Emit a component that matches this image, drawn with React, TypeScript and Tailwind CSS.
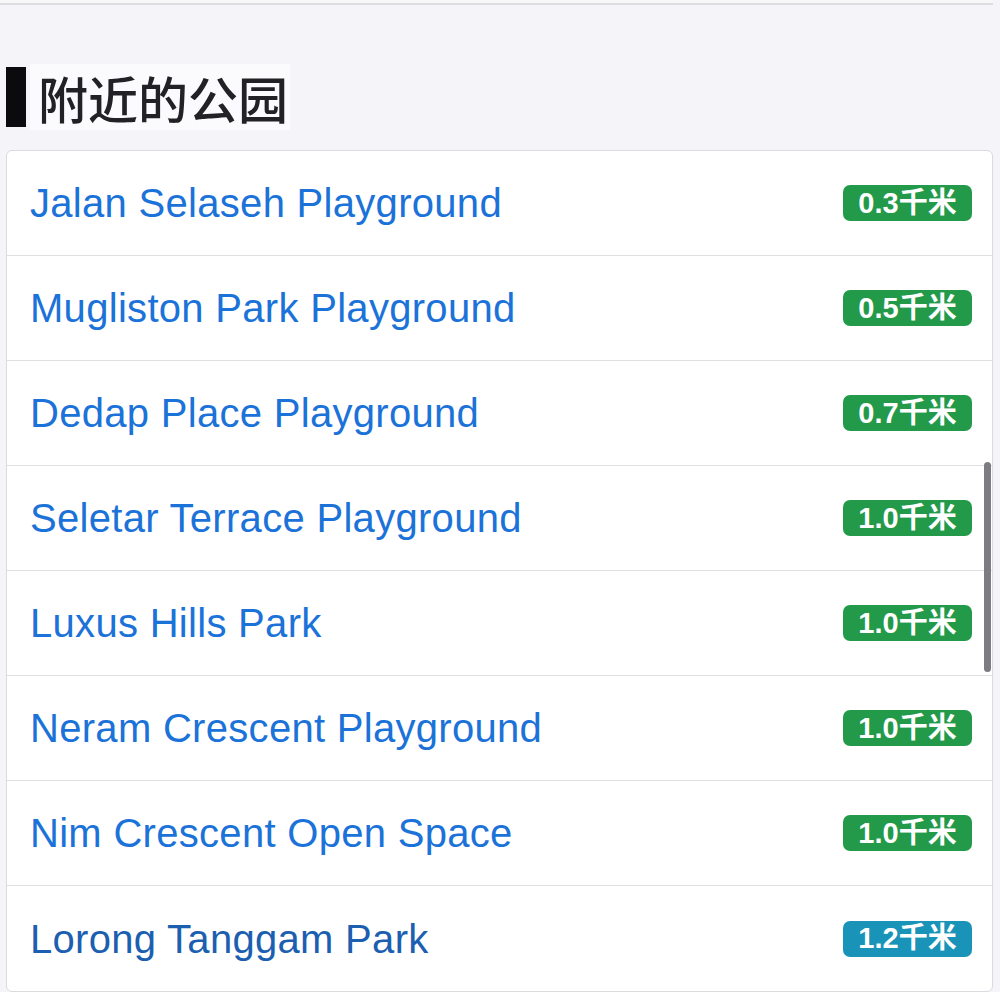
import React from "react";

const parks: { name: string; dist: string; blue?: boolean }[] = [
  { name: "Jalan Selaseh Playground", dist: "0.3千米" },
  { name: "Mugliston Park Playground", dist: "0.5千米" },
  { name: "Dedap Place Playground", dist: "0.7千米" },
  { name: "Seletar Terrace Playground", dist: "1.0千米" },
  { name: "Luxus Hills Park", dist: "1.0千米" },
  { name: "Neram Crescent Playground", dist: "1.0千米" },
  { name: "Nim Crescent Open Space", dist: "1.0千米" },
  { name: "Lorong Tanggam Park", dist: "1.2千米", blue: true },
];

export default function App() {
  return (
    <div
      className="w-[1000px] h-[992px] overflow-hidden bg-[#f4f4f9]"
      style={{ fontFamily: '"Liberation Sans", Arial, "Noto Sans CJK SC", sans-serif' }}
    >
      <div className="h-[3px] w-[993px] bg-[#f7f7fa]" />
      <div className="h-[2px] w-[993px] bg-[#dddde2]" />
      <div className="h-[62px]" />
      <div className="flex items-center ml-[6px] h-[60px]">
        <div className="w-[20px] h-[60px] bg-[#0b0b0d]" />
        <div
          className="ml-[4px] h-[66px] flex items-center pl-[8px] pr-[2px] bg-[#fbfbfd] text-[50px] font-medium leading-none text-[#222226]"
          style={{ fontFamily: '"Noto Sans CJK SC", sans-serif' }}
        >
          附近的公园
        </div>
      </div>
      <div className="h-[23px]" />
      <div className="relative ml-[6px] w-[987px] bg-white border border-[#dadadf] rounded-[6px] overflow-hidden">
        {parks.map((p, i) => (
          <div
            key={p.name}
            className={`flex items-center justify-between h-[105px] pl-[23px] pr-[20px] ${i < parks.length - 1 ? "border-b border-[#dedee3]" : ""}`}
          >
            <span
              className={`text-[40px] tracking-[0.3px] leading-none ${p.blue ? "text-[#1c5fb0]" : "text-[#1b72d8]"}`}
            >
              {p.name}
            </span>
            <span
              className={`flex items-center justify-center w-[129px] h-[36px] rounded-[7px] text-white text-[29px] font-bold leading-none ${p.blue ? "bg-[#1a93b9]" : "bg-[#23994a]"}`}
            >
              {p.dist}
            </span>
          </div>
        ))}
        <div className="absolute right-[1px] top-[311px] w-[7px] h-[210px] rounded-full bg-[#7d7c83]" />
      </div>
    </div>
  );
}
